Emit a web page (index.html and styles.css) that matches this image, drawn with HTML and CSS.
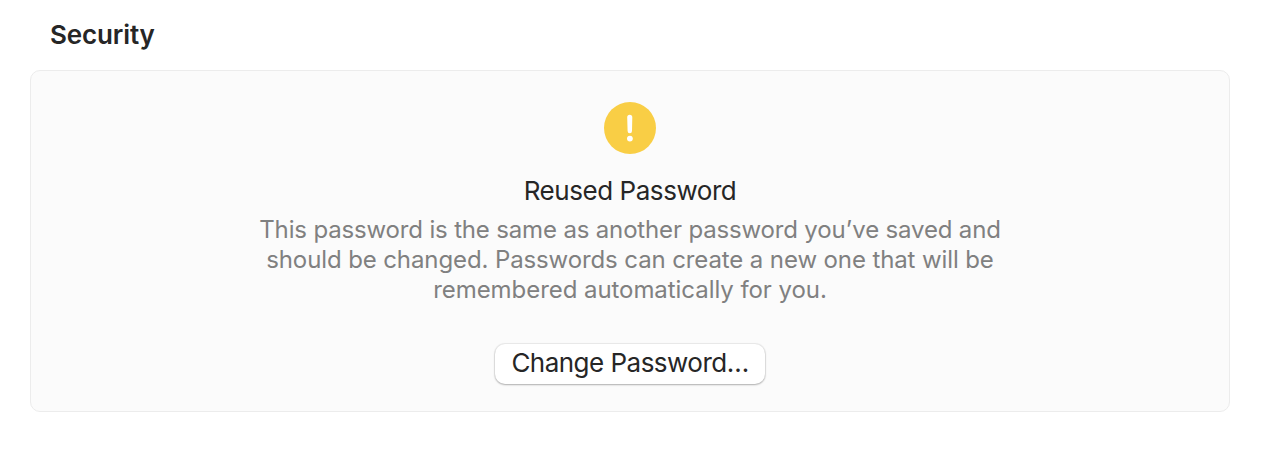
FILE: index.html
```html
<!DOCTYPE html>
<html lang="en">

<head>
	<meta charset="UTF-8">
	<title>Security</title>
	<link rel="stylesheet" href="styles.css">
</head>

<body>
	<section class="security">
		<h2>Security</h2>
		<div class="card">
			<svg class="warning-icon" width="52" height="52" viewBox="0 0 52 52">
				<circle cx="26" cy="26" r="26" fill="#f9ce45"/>
				<path d="M23.2 15.2a2.55 2.55 0 0 1 5.1 0l-.3 13.8a2.2 2.2 0 0 1-4.4 0z" fill="#fff"/>
				<circle cx="25.9" cy="36.6" r="2.9" fill="#fff"/>
			</svg>
			<h3>Reused Password</h3>
			<p class="message">
				<span class="line line1">This password is the same as another password you’ve saved and</span>
				<span class="line line2">should be changed. Passwords can create a new one that will be</span>
				<span class="line line3">remembered automatically for you.</span>
			</p>
			<button type="button" class="change-btn">Change Password…</button>
		</div>
	</section>
</body>

</html>
```
FILE: styles.css
```css
body {
  margin: 0;
  background-color: #fff;
  font-family: Inter, "Liberation Sans", sans-serif;
  color: #262626;
}

.security {
  padding: 20px 36px 0 30px;
}

h2 {
  margin: 0 0 20px 20px;
  font-size: 26px;
  line-height: 30px;
  font-weight: 600;
  letter-spacing: -0.14px;
}

.card {
  display: flex;
  flex-direction: column;
  align-items: center;
  box-sizing: border-box;
  height: 342px;
  padding-top: 31px;
  background-color: #fbfbfb;
  border: 1px solid #ececec;
  border-radius: 10px;
}

.warning-icon {
  display: block;
}

h3 {
  margin: 21px 0 8px;
  font-size: 26px;
  line-height: 32px;
  font-weight: 400;
  letter-spacing: -0.44px;
}

.message {
  margin: 0 0 39px;
  font-size: 24px;
  line-height: 30px;
  text-align: center;
  color: #808080;
}

.line {
  display: block;
  white-space: nowrap;
}

.line1 {
  letter-spacing: -0.16px;
}

.line2 {
  letter-spacing: -0.11px;
}

.line3 {
  letter-spacing: -0.06px;
}

.change-btn {
  height: 40px;
  width: 270px;
  padding: 0 0 2px;
  border: none;
  border-radius: 10px;
  background-color: #fff;
  box-shadow: 0 0 1px 1px rgba(0, 0, 0, 0.07), 0 1px 2px rgba(0, 0, 0, 0.25);
  font-family: inherit;
  font-size: 26px;
  line-height: 38px;
  letter-spacing: -0.52px;
  color: #262626;
  white-space: nowrap;
}
```
